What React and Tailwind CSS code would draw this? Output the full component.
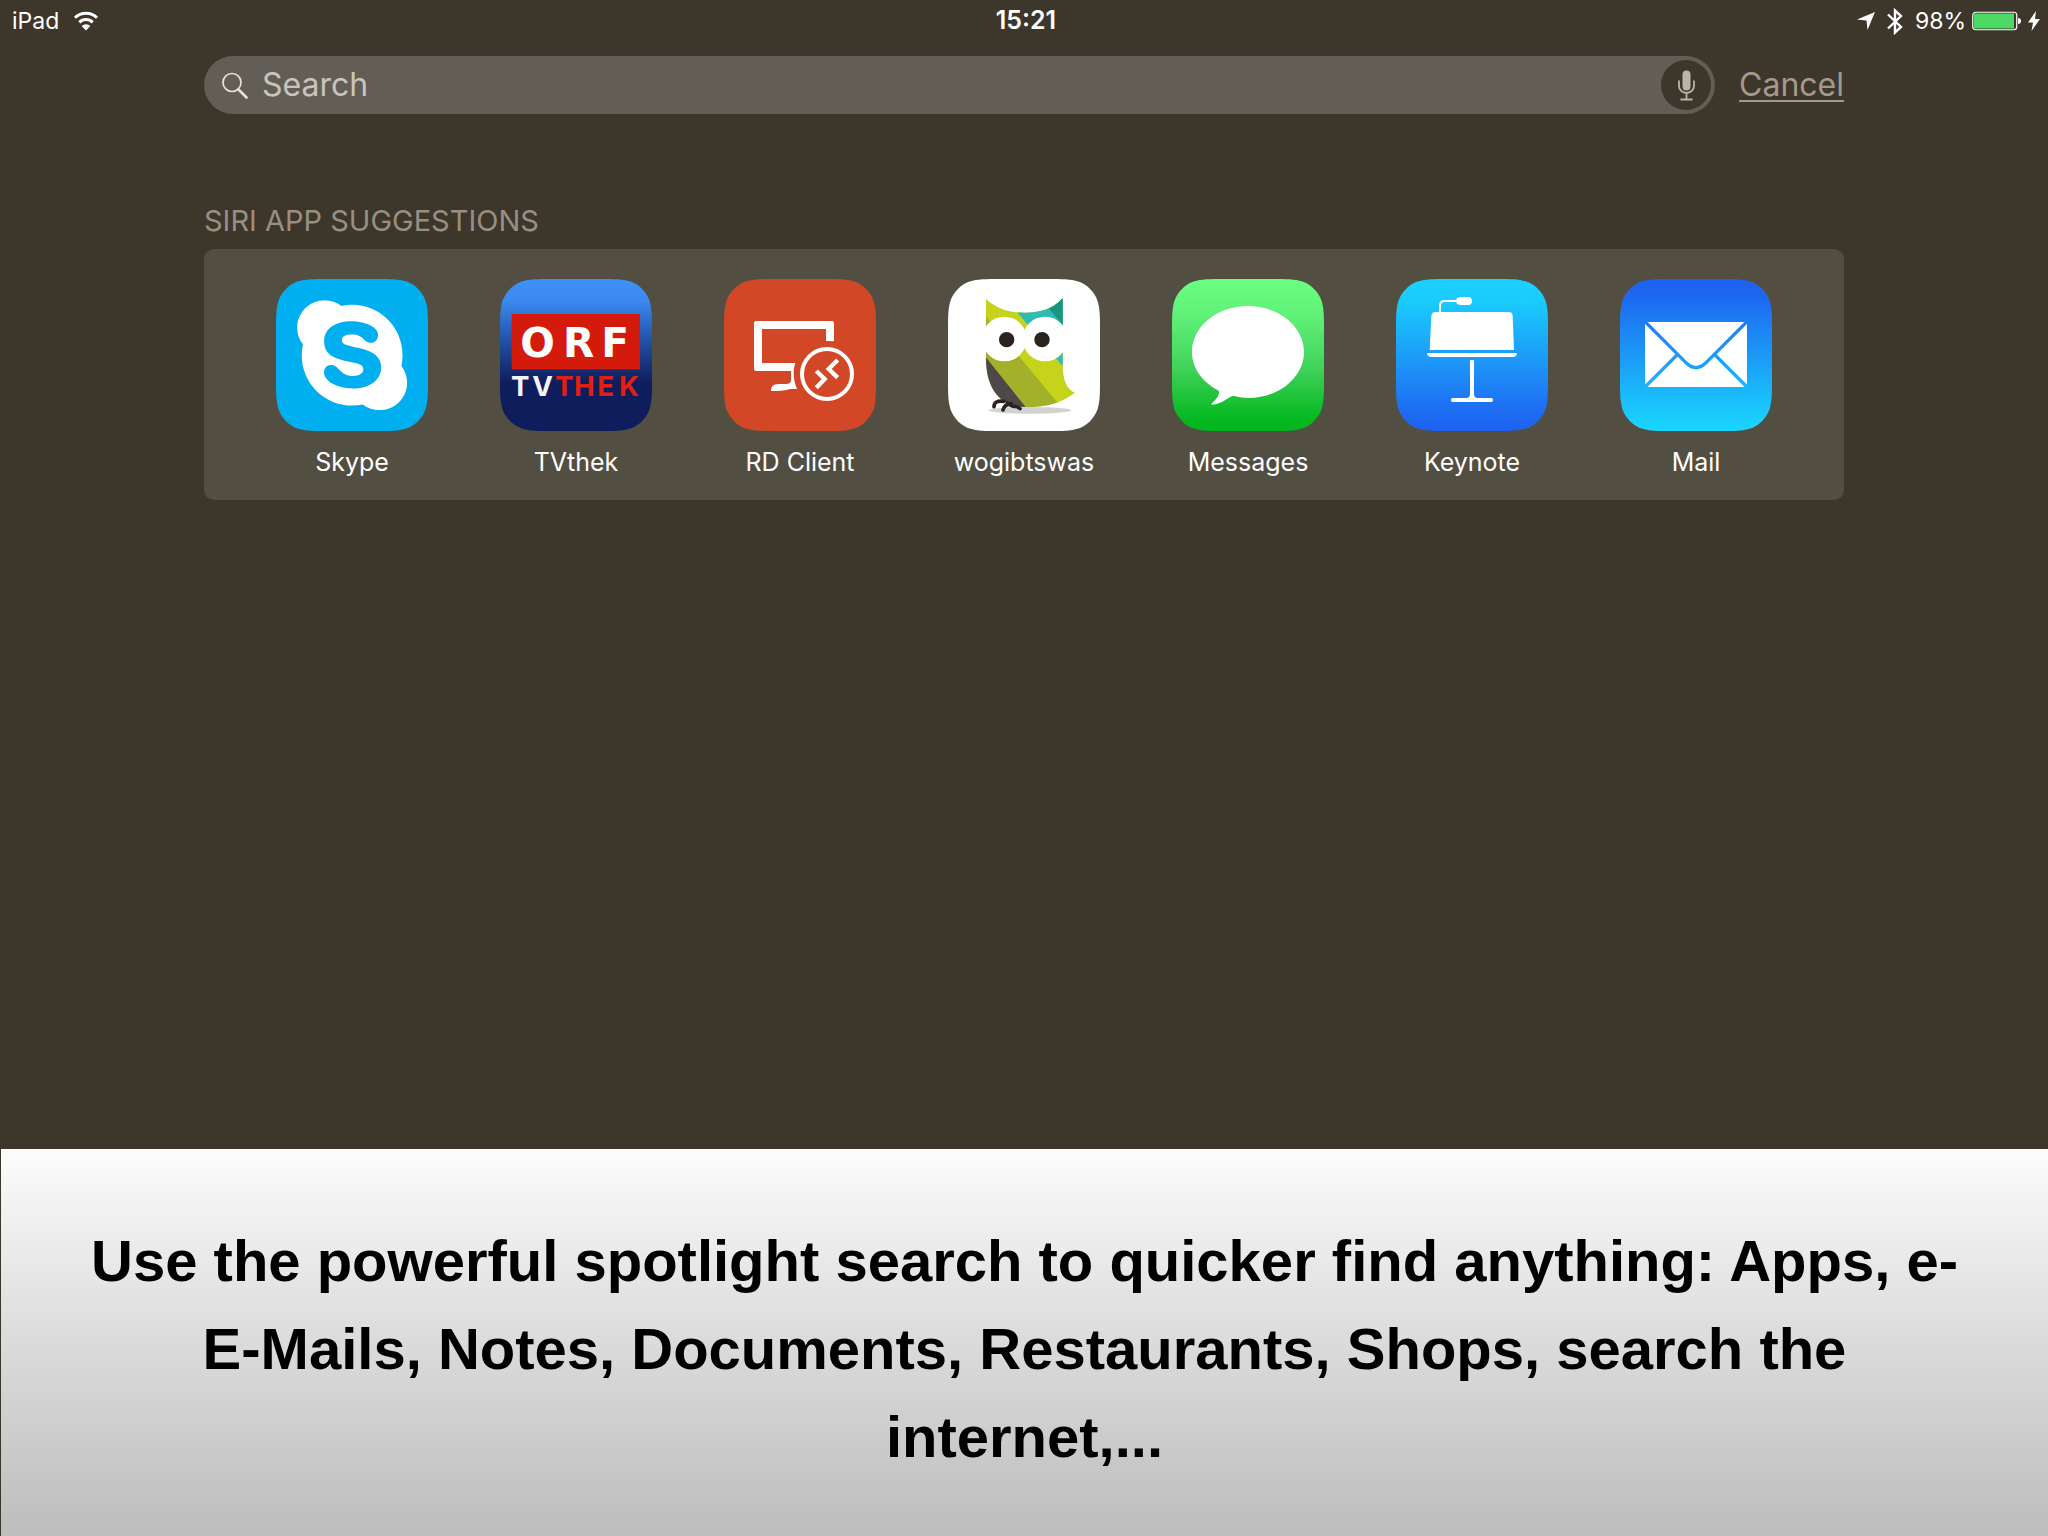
import { FaSkype } from 'react-icons/fa';

const TILE =
  'M156.8 0H299.2C344.3 0 366.9 0 391.2 7.7C417.7 17.3 438.7 38.3 448.3 64.8C456 89.1 456 111.7 456 156.8V299.2C456 344.3 456 366.9 448.3 391.2C438.7 417.7 417.7 438.7 391.2 448.3C366.9 456 344.3 456 299.2 456H156.8C111.7 456 89.1 456 64.8 448.3C38.3 438.7 17.3 417.7 7.7 391.2C0 366.9 0 344.3 0 299.2V156.8C0 111.7 0 89.1 7.7 64.8C17.3 38.3 38.3 17.3 64.8 7.7C89.1 0 111.7 0 156.8 0Z';

// Rounded app tile, `stops` is a list of [offset, color]
function Tile({ id, stops, children }) {
  return (
    <svg viewBox="0 0 456 456" className="size-[152px]" aria-hidden="true">
      <defs>
        <linearGradient id={id} x1="0" y1="0" x2="0" y2="1">
          {stops.map(([offset, color]) => (
            <stop key={offset} offset={offset} stopColor={color} />
          ))}
        </linearGradient>
      </defs>
      <path d={TILE} fill={`url(#${id})`} />
      {children}
    </svg>
  );
}

function SkypeIcon() {
  return (
    <Tile id="skype" stops={[[0, '#00aff0'], [1, '#00aff0']]}>
      <FaSkype x="40" y="40" size={377} color="#fff" />
    </Tile>
  );
}

function TvthekIcon() {
  return (
    <Tile id="tvthek" stops={[[0, '#3e90f7'], [0.14, '#3c8af0'], [0.4, '#2352a8'], [0.68, '#0f1d5c'], [1, '#0f1d5c']]}>
      <rect x="35" y="105" width="385" height="166" fill="#d41a0b" />
      <text x="61 189 304" y="233" fontSize="122" fill="#fff" className="font-['DejaVu_Sans'] font-bold">ORF</text>
      <g className="font-['Inter'] font-bold">
        <text x="33 97" y="351" fontSize="83" fill="#f4f4f8">TV</text>
        <text x="165 222 292 357" y="351" fontSize="83" fill="#e21f10">THEK</text>
      </g>
    </Tile>
  );
}

function RdClientIcon() {
  return (
    <Tile id="rd" stops={[[0, '#d24726'], [1, '#d24726']]}>
      <path
        d="M96 126H324Q330 126 330 132V187Q318 185 306 186V150H114V252H214Q209 264 209 283Q209 308 219 330H199Q180 336 158 336H141Q140 316 162 315H186Q201 315 201 303V276H96Q90 276 90 270V132Q90 126 96 126Z"
        fill="#fff"
      />
      <circle cx="309" cy="285" r="75" fill="none" stroke="#fff" strokeWidth="12" />
      <path d="M277 276L302 300L277 326M341 243L314 270L341 296" fill="none" stroke="#fff" strokeWidth="13" />
    </Tile>
  );
}

function OwlIcon() {
  return (
    <Tile id="owl" stops={[[0, '#fff'], [1, '#fff']]}>
      <clipPath id="owl-body">
        <path d="M114 60C150 93 190 101 231 101S312 93 344 58V255C344 300 355 332 381 341C340 372 300 384 231 384C150 384 114 320 114 240Z" />
      </clipPath>
      <ellipse cx="246" cy="394" rx="124" ry="10" fill="#d2d2d2" />
      <g clipPath="url(#owl-body)">
        <path d="M100 40H390V390H100Z" fill="#c6d31b" />
        <path d="M209 40V101L343 261H370V40Z" fill="#2fbcb4" />
        <path d="M290 74L350 145V50H290Z" fill="#17977f" />
        <path d="M100 96L341 386L235 392L100 220Z" fill="#a2b02a" />
        <path d="M100 218L116 238L236 388V400H100Z" fill="#4d4948" />
      </g>
      <circle cx="169" cy="180" r="67" fill="#fff" />
      <circle cx="291" cy="180" r="67" fill="#fff" />
      <circle cx="176" cy="182" r="23" fill="#2a2320" />
      <circle cx="282" cy="182" r="23" fill="#2a2320" />
      <path
        d="M138 383C138 370 148 364 167 367M165 393C168 380 176 375 190 374M178 372C196 390 205 376 216 389"
        fill="none"
        stroke="#2a2320"
        strokeWidth="11"
        strokeLinecap="round"
      />
    </Tile>
  );
}

function MessagesIcon() {
  return (
    <Tile id="messages" stops={[[0, '#6aff80'], [0.25, '#60f078'], [0.6, '#3fd158'], [0.92, '#04b820'], [1, '#02b51e']]}>
      <path
        d="M228 81C321 81 396 143 396 219S321 357 228 357C216 357 203 355 190 352C180 349 172 356 160 363C146 372 134 376 121 377C116 377 120 372 126 367C136 357 147 340 138 334C91 309 60 267 60 219C60 143 135 81 228 81Z"
        fill="#fff"
      />
    </Tile>
  );
}

function KeynoteIcon() {
  return (
    <Tile id="keynote" stops={[[0, '#1bd1fe'], [0.15, '#1bcbfe'], [0.85, '#1e6ff3'], [1, '#1d60f1']]}>
      <path d="M132 101V80Q132 66 146 66H184" fill="none" stroke="#fff" strokeWidth="6" />
      <path d="M180 66C180 58 186 54 196 54H217Q228 54 228 66T217 78H196C186 78 180 74 180 66Z" fill="#fff" />
      <path d="M106 112Q107 99 119 99H338Q350 99 350 112L354 213H101Z" fill="#fff" />
      <path d="M93 222H363Q362 234 350 234H106Q94 234 93 222Z" fill="#fff" />
      <path d="M222 243H234V346Q235 357 245 357H286Q291 357 291 363T286 369H170Q165 369 165 363T170 357H211Q221 357 222 346Z" fill="#fff" />
    </Tile>
  );
}

function MailIcon() {
  return (
    <Tile id="mail" stops={[[0, '#1d62f0'], [0.1, '#1e66f1'], [0.9, '#1accfd'], [1, '#19d5fd']]}>
      <mask id="mail-folds" maskUnits="userSpaceOnUse" x="0" y="0" width="456" height="456">
        <rect x="75" y="129" width="306" height="195" fill="#fff" />
        <path
          d="M72 125L200 253Q228 279 256 253L384 125M72 327L172 227M384 327L284 227"
          fill="none"
          stroke="#000"
          strokeWidth="10"
        />
      </mask>
      <rect x="75" y="129" width="306" height="195" fill="#fff" mask="url(#mail-folds)" />
    </Tile>
  );
}

const APPS = [
  { name: 'Skype', Icon: SkypeIcon },
  { name: 'TVthek', Icon: TvthekIcon },
  { name: 'RD Client', Icon: RdClientIcon },
  { name: 'wogibtswas', Icon: OwlIcon },
  { name: 'Messages', Icon: MessagesIcon },
  { name: 'Keynote', Icon: KeynoteIcon },
  { name: 'Mail', Icon: MailIcon },
];

function StatusBar() {
  return (
    <header className="grid h-[42px] grid-cols-3 items-center pl-3 pr-2 text-[23px] text-white">
      <div className="flex items-center gap-3.5">
        <span>iPad</span>
        <svg viewBox="0 0 26 20" className="h-5 w-[26px]" aria-label="Wi-Fi">
          <path d="M2 6.8A15.5 15.5 0 0 1 24 6.8M6.3 11.4A9.4 9.4 0 0 1 19.7 11.4" fill="none" stroke="#fff" strokeWidth="3" />
          <path d="M13 19.5L8.6 15A6.2 6.2 0 0 1 17.4 15Z" fill="#fff" />
        </svg>
      </div>
      <time className="text-center text-[25px] font-semibold">15:21</time>
      <div className="flex items-center justify-end gap-2">
        <svg viewBox="0 0 18 18" className="mr-1 size-[18px]" aria-label="Location">
          <path d="M18 0L10.5 18L9.5 8.5L0 7.5Z" fill="#fff" />
        </svg>
        <svg viewBox="0 0 16 27" className="mr-1 h-[27px] w-4" aria-label="Bluetooth">
          <path d="M1 6.5L14 19L8 24.5V2.5L14 8L1 20.5" fill="none" stroke="#fff" strokeWidth="2.4" />
        </svg>
        <div className="flex items-center gap-1.5">
          <span>98%</span>
          <svg viewBox="0 0 50 20" className="h-5 w-[50px]" aria-label="Battery">
            <rect x="0.75" y="1.25" width="44" height="17.5" rx="3" fill="none" stroke="#fff" strokeWidth="1.2" />
            <rect x="2" y="2.5" width="40" height="15" fill="#4cd964" />
            <path d="M46 7Q49 7 49 10T46 13Z" fill="#fff" />
          </svg>
        </div>
        <svg viewBox="0 0 12 20" className="-ml-0.5 h-5 w-3" aria-label="Charging">
          <path d="M8 0L0 11.5H5L3.5 20L12 8H7Z" fill="#fff" />
        </svg>
      </div>
    </header>
  );
}

function SearchBar() {
  return (
    <form className="mt-3.5 flex items-center gap-6" onSubmit={(e) => e.preventDefault()}>
      <div className="flex h-[58px] flex-1 items-center rounded-full bg-[#625d55] pl-[18px] pr-1">
        <svg viewBox="0 0 26 27" className="h-[27px] w-[26px]" aria-hidden="true">
          <circle cx="10" cy="10.5" r="9" fill="none" stroke="#e8e3da" strokeWidth="1.7" />
          <path d="M16.5 17.5L24.5 25.5" stroke="#e8e3da" strokeWidth="2.6" strokeLinecap="round" />
        </svg>
        <input
          type="text"
          aria-label="Search"
          placeholder="Search"
          className="ml-3.5 min-w-0 flex-1 bg-transparent text-[32px] leading-10 text-[#c9c4bc] outline-none placeholder:text-[#c9c4bc]"
        />
        <button type="button" aria-label="Dictate" className="flex size-[50px] items-center justify-center rounded-full bg-[#3d362b]">
          <svg viewBox="0 0 17 31" className="h-[31px] w-[17px]" aria-hidden="true">
            <rect x="4.5" y="0.5" width="8" height="20" rx="4" fill="#bbb5a9" />
            <path d="M1 10.5V16A7.5 7 0 0 0 16 16V10.5M8.5 23V29.5M2.5 29.5H14.5" fill="none" stroke="#bbb5a9" strokeWidth="1.8" />
          </svg>
        </button>
      </div>
      <button type="button" className="text-[32px] leading-10 text-[#a39a8b] underline decoration-2 underline-offset-4">
        Cancel
      </button>
    </form>
  );
}

export default function App() {
  return (
    <div className="flex min-h-screen flex-col bg-[#3d362b] font-['Inter',sans-serif]">
      <StatusBar />
      <main className="flex-1 px-51 pb-16">
        <SearchBar />
        <section className="mt-[87px]">
          <h2 className="text-[29px] leading-10 text-[#988f83]">SIRI APP SUGGESTIONS</h2>
          <ul className="mt-2 grid grid-cols-7 rounded-[10px] bg-[#524e42] px-9 pb-[19px] pt-[30px]">
            {APPS.map(({ name, Icon }) => (
              <li key={name}>
                <button type="button" className="flex w-full flex-col items-center gap-[13px] text-[25px] leading-[37px] text-white">
                  <Icon />
                  <span>{name}</span>
                </button>
              </li>
            ))}
          </ul>
        </section>
      </main>
      <footer className="ml-px bg-linear-to-b from-[#fcfcfc] via-[#dbdbdb] to-[#bdbdbd] px-16 pb-[55px] pt-[68px]">
        <p className="text-center font-['Liberation_Sans',sans-serif] text-[58px] font-bold leading-[88px] text-black">
          Use the powerful spotlight search to quicker find anything: Apps, e-
          <br />
          E-Mails, Notes, Documents, Restaurants, Shops, search the
          <br />
          internet,...
        </p>
      </footer>
    </div>
  );
}
